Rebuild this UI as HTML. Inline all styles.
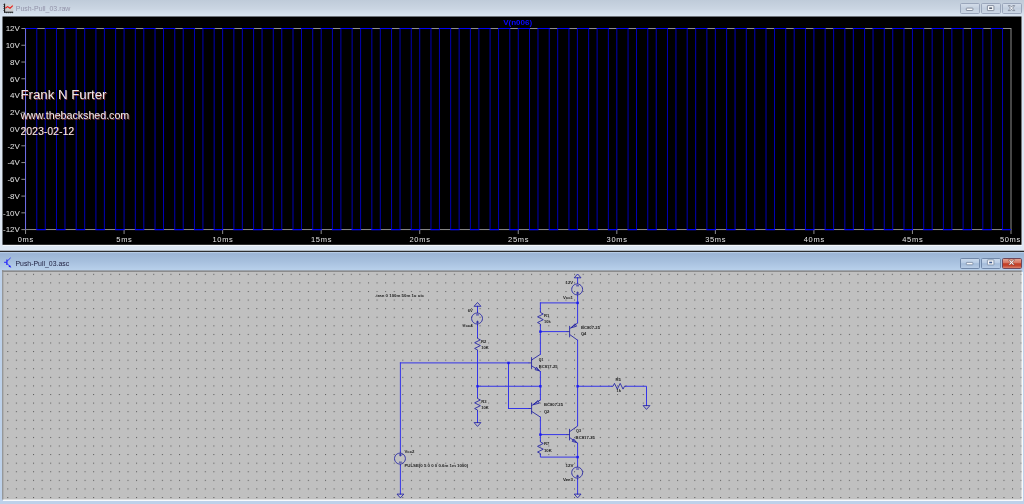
<!DOCTYPE html>
<html><head><meta charset="utf-8"><title>Push-Pull_03</title>
<style>
html,body{margin:0;padding:0}
body{width:1024px;height:504px;overflow:hidden;position:relative;background:#dfe8f3;font-family:"Liberation Sans",Arial,sans-serif}
.abs{position:absolute}
.w1{left:0;top:0;width:1024px;height:251px;background:#dde7f3}
.tb1{left:0;top:0;width:1024px;height:17px;background:linear-gradient(#bfcbd9 0%,#cad5e2 50%,#dbe6f2 100%)}
.t1{left:15.8px;top:4.4px;font-size:7.1px;line-height:9px;color:#a3a3b3;letter-spacing:-0.05px;white-space:nowrap}
.plot{left:0;top:0;display:block;will-change:transform}
.wh1{left:3px;top:17px;width:1019.4px;height:228.6px;background:#f3f6fa}
.sep{left:0;top:250.9px;width:1024px;height:1.1px;background:#2e2e2e}
.w2{left:0;top:252px;width:1024px;height:252px;background:#bdd1ea}
.tb2{left:0;top:252px;width:1024px;height:18px;background:linear-gradient(#c2d6ee 0%,#9bb4d5 9%,#a6bfdd 50%,#b8d0eb 100%)}
.t2{left:15.5px;top:258.8px;font-size:7.2px;line-height:9px;color:#1c1c3c;letter-spacing:-0.1px;white-space:nowrap}
.wh2{left:3px;top:272px;width:1019.5px;height:228.5px;background:#f6f8fb}
.sch{left:0;top:252px;display:block;will-change:transform}
.btn{top:3.3px;width:19.4px;height:10.4px;box-sizing:border-box;border:0.9px solid #9aa6bb;border-radius:1.6px;background:linear-gradient(#d3dce9,#c2cede 50%,#cbd6e4)}
.b2{top:257.6px;height:11px;border-color:#7188aa;background:linear-gradient(#c9d9ec 0%,#b7cbe4 45%,#a3bbd9 52%,#b9cde6 100%)}
.bx{border-color:#6e4658;background:linear-gradient(#e2a392 0%,#d5735f 45%,#c23c24 52%,#c74630 75%,#d98570 100%)}
.ico{left:0;top:0}
</style></head><body>
<div class="abs w1"></div>
<div class="abs tb1"></div>
<div class="abs wh1"></div>
<svg class="abs ico" width="16" height="16" viewBox="0 0 16 16"><rect x="5" y="4" width="8.2" height="7.6" fill="#cdcdcd"/><path d="M4.6 3.6V12.6M4.2 12.2H13.2" stroke="#111" stroke-width="1" fill="none"/><path d="M3.4 4.5h1.2M3.4 6.5h1.2M3.4 8.5h1.2M3.4 10.5h1.2M6.5 12.2v1M8.5 12.2v1M10.5 12.2v1M12.5 12.2v1" stroke="#222" stroke-width="0.7"/><path d="M5.3 8.3L7.6 6.6L10 8.2L12.8 5.6" stroke="#e81c1c" stroke-width="1.1" fill="none"/></svg>
<div class="abs btn" style="left:960.3px"></div>
<div class="abs btn" style="left:981.3px"></div>
<div class="abs btn" style="left:1002.3px"></div>
<svg class="abs" style="left:960px;top:0" width="64" height="16" viewBox="960 0 64 16"><g fill="#f4f6f9" stroke="#707a8c" stroke-width="0.8"><rect x="966.3" y="8.1" width="6.6" height="2.4" rx="0.5"/><rect x="987.4" y="5.6" width="6.5" height="5" rx="0.4"/><path d="M1008.3 5.6h2l1.2 1.5l1.2-1.5h2l-2.1 2.5l2.2 2.5h-2.1l-1.2-1.5l-1.2 1.5h-2.1l2.2-2.5z"/></g><rect x="989.2" y="7.4" width="2.9" height="1.6" fill="#5a6272"/></svg>
<svg class="abs plot" width="1024" height="252" viewBox="0 0 1024 252">
<rect x="2.5" y="16.5" width="1019" height="228.3" fill="#000"/>
<g stroke="#9c9c9c" stroke-width="0.9" fill="none">
<rect x="25.55" y="28.50" width="985.45" height="201.10"/>
<path d="M25.55 28.50 h-4.2"/>
<path d="M25.55 45.26 h-4.2"/>
<path d="M25.55 62.02 h-4.2"/>
<path d="M25.55 78.78 h-4.2"/>
<path d="M25.55 95.53 h-4.2"/>
<path d="M25.55 112.29 h-4.2"/>
<path d="M25.55 129.05 h-4.2"/>
<path d="M25.55 145.81 h-4.2"/>
<path d="M25.55 162.57 h-4.2"/>
<path d="M25.55 179.32 h-4.2"/>
<path d="M25.55 196.08 h-4.2"/>
<path d="M25.55 212.84 h-4.2"/>
<path d="M25.55 229.60 h-4.2"/>
<path d="M25.55 229.60 v4.4"/>
<path d="M124.09 229.60 v4.4"/>
<path d="M222.64 229.60 v4.4"/>
<path d="M321.19 229.60 v4.4"/>
<path d="M419.73 229.60 v4.4"/>
<path d="M518.27 229.60 v4.4"/>
<path d="M616.82 229.60 v4.4"/>
<path d="M715.36 229.60 v4.4"/>
<path d="M813.91 229.60 v4.4"/>
<path d="M912.45 229.60 v4.4"/>
<path d="M1011.00 229.60 v4.4"/>
</g>
<g font-family="Liberation Sans, Arial, sans-serif" font-size="8" fill="#e4e4e4" text-anchor="end">
<text x="19.9" y="31.25">12V</text>
<text x="19.9" y="48.01">10V</text>
<text x="19.9" y="64.77">8V</text>
<text x="19.9" y="81.53">6V</text>
<text x="19.9" y="98.28">4V</text>
<text x="19.9" y="115.04">2V</text>
<text x="19.9" y="131.80">0V</text>
<text x="19.9" y="148.56">-2V</text>
<text x="19.9" y="165.32">-4V</text>
<text x="19.9" y="182.07">-6V</text>
<text x="19.9" y="198.83">-8V</text>
<text x="19.9" y="215.59">-10V</text>
<text x="19.9" y="232.35">-12V</text>
</g>
<g font-family="Liberation Sans, Arial, sans-serif" font-size="7.5" fill="#e4e4e4" text-anchor="middle" letter-spacing="0.7">
<text x="25.90" y="242.3">0ms</text>
<text x="124.44" y="242.3">5ms</text>
<text x="222.99" y="242.3">10ms</text>
<text x="321.54" y="242.3">15ms</text>
<text x="420.08" y="242.3">20ms</text>
<text x="518.62" y="242.3">25ms</text>
<text x="617.17" y="242.3">30ms</text>
<text x="715.71" y="242.3">35ms</text>
<text x="814.26" y="242.3">40ms</text>
<text x="912.80" y="242.3">45ms</text>
<text x="1010.45" y="242.3">50ms</text>
</g>
<path d="M25.55 229.60V28.50 M36.78 28.50V229.60 M45.26 229.60V28.50 M56.49 28.50V229.60 M64.97 229.60V28.50 M76.20 28.50V229.60 M84.68 229.60V28.50 M95.91 28.50V229.60 M104.39 229.60V28.50 M115.62 28.50V229.60 M124.09 229.60V28.50 M135.33 28.50V229.60 M143.80 229.60V28.50 M155.04 28.50V229.60 M163.51 229.60V28.50 M174.75 28.50V229.60 M183.22 229.60V28.50 M194.46 28.50V229.60 M202.93 229.60V28.50 M214.17 28.50V229.60 M222.64 229.60V28.50 M233.87 28.50V229.60 M242.35 229.60V28.50 M253.58 28.50V229.60 M262.06 229.60V28.50 M273.29 28.50V229.60 M281.77 229.60V28.50 M293.00 28.50V229.60 M301.48 229.60V28.50 M312.71 28.50V229.60 M321.19 229.60V28.50 M332.42 28.50V229.60 M340.89 229.60V28.50 M352.13 28.50V229.60 M360.60 229.60V28.50 M371.84 28.50V229.60 M380.31 229.60V28.50 M391.55 28.50V229.60 M400.02 229.60V28.50 M411.26 28.50V229.60 M419.73 229.60V28.50 M430.96 28.50V229.60 M439.44 229.60V28.50 M450.67 28.50V229.60 M459.15 229.60V28.50 M470.38 28.50V229.60 M478.86 229.60V28.50 M490.09 28.50V229.60 M498.57 229.60V28.50 M509.80 28.50V229.60 M518.27 229.60V28.50 M529.51 28.50V229.60 M537.98 229.60V28.50 M549.22 28.50V229.60 M557.69 229.60V28.50 M568.93 28.50V229.60 M577.40 229.60V28.50 M588.64 28.50V229.60 M597.11 229.60V28.50 M608.35 28.50V229.60 M616.82 229.60V28.50 M628.05 28.50V229.60 M636.53 229.60V28.50 M647.76 28.50V229.60 M656.24 229.60V28.50 M667.47 28.50V229.60 M675.95 229.60V28.50 M687.18 28.50V229.60 M695.66 229.60V28.50 M706.89 28.50V229.60 M715.36 229.60V28.50 M726.60 28.50V229.60 M735.07 229.60V28.50 M746.31 28.50V229.60 M754.78 229.60V28.50 M766.02 28.50V229.60 M774.49 229.60V28.50 M785.73 28.50V229.60 M794.20 229.60V28.50 M805.44 28.50V229.60 M813.91 229.60V28.50 M825.14 28.50V229.60 M833.62 229.60V28.50 M844.85 28.50V229.60 M853.33 229.60V28.50 M864.56 28.50V229.60 M873.04 229.60V28.50 M884.27 28.50V229.60 M892.75 229.60V28.50 M903.98 28.50V229.60 M912.45 229.60V28.50 M923.69 28.50V229.60 M932.16 229.60V28.50 M943.40 28.50V229.60 M951.87 229.60V28.50 M963.11 28.50V229.60 M971.58 229.60V28.50 M982.82 28.50V229.60 M991.29 229.60V28.50 M1002.53 28.50V229.60" fill="none" stroke="#0000d6" stroke-width="0.85"/>
<path d="M25.15 28.50H37.18 M36.38 229.60H45.66 M44.86 28.50H56.89 M56.09 229.60H65.37 M64.57 28.50H76.60 M75.80 229.60H85.08 M84.28 28.50H96.31 M95.51 229.60H104.79 M103.99 28.50H116.02 M115.22 229.60H124.50 M123.69 28.50H135.73 M134.93 229.60H144.20 M143.40 28.50H155.44 M154.64 229.60H163.91 M163.11 28.50H175.15 M174.35 229.60H183.62 M182.82 28.50H194.86 M194.06 229.60H203.33 M202.53 28.50H214.57 M213.77 229.60H223.04 M222.24 28.50H234.27 M233.47 229.60H242.75 M241.95 28.50H253.98 M253.18 229.60H262.46 M261.66 28.50H273.69 M272.89 229.60H282.17 M281.37 28.50H293.40 M292.60 229.60H301.88 M301.08 28.50H313.11 M312.31 229.60H321.58 M320.79 28.50H332.82 M332.02 229.60H341.29 M340.49 28.50H352.53 M351.73 229.60H361.00 M360.20 28.50H372.24 M371.44 229.60H380.71 M379.91 28.50H391.95 M391.15 229.60H400.42 M399.62 28.50H411.66 M410.86 229.60H420.13 M419.33 28.50H431.36 M430.56 229.60H439.84 M439.04 28.50H451.07 M450.27 229.60H459.55 M458.75 28.50H470.78 M469.98 229.60H479.26 M478.46 28.50H490.49 M489.69 229.60H498.97 M498.17 28.50H510.20 M509.40 229.60H518.67 M517.88 28.50H529.91 M529.11 229.60H538.38 M537.58 28.50H549.62 M548.82 229.60H558.09 M557.29 28.50H569.33 M568.53 229.60H577.80 M577.00 28.50H589.04 M588.24 229.60H597.51 M596.71 28.50H608.75 M607.95 229.60H617.22 M616.42 28.50H628.45 M627.65 229.60H636.93 M636.13 28.50H648.16 M647.36 229.60H656.64 M655.84 28.50H667.87 M667.07 229.60H676.35 M675.55 28.50H687.58 M686.78 229.60H696.06 M695.26 28.50H707.29 M706.49 229.60H715.76 M714.96 28.50H727.00 M726.20 229.60H735.47 M734.67 28.50H746.71 M745.91 229.60H755.18 M754.38 28.50H766.42 M765.62 229.60H774.89 M774.09 28.50H786.13 M785.33 229.60H794.60 M793.80 28.50H805.84 M805.04 229.60H814.31 M813.51 28.50H825.54 M824.74 229.60H834.02 M833.22 28.50H845.25 M844.45 229.60H853.73 M852.93 28.50H864.96 M864.16 229.60H873.44 M872.64 28.50H884.67 M883.87 229.60H893.15 M892.35 28.50H904.38 M903.58 229.60H912.85 M912.05 28.50H924.09 M923.29 229.60H932.56 M931.76 28.50H943.80 M943.00 229.60H952.27 M951.47 28.50H963.51 M962.71 229.60H971.98 M971.18 28.50H983.22 M982.42 229.60H991.69 M990.89 28.50H1002.93 M1002.13 229.60H1011.00" fill="none" stroke="#0000f4" stroke-width="1.1"/>
<text x="517.6" y="25.3" font-family="Liberation Sans, Arial, sans-serif" font-weight="bold" font-size="8" fill="#0a0aff" text-anchor="middle">V(n006)</text>
<g font-family="Liberation Sans, Arial, sans-serif" fill="#eeeaea" style="text-shadow:0.8px 0.8px 0 #7e3838">
<text x="20.4" y="99.4" font-size="13.25">Frank N Furter</text>
<text x="20.4" y="119.4" font-size="10.65">www.thebackshed.com</text>
<text x="20.4" y="134.6" font-size="10.5">2023-02-12</text>
</g>
<text x="15.8" y="11.25" font-family="Liberation Sans, Arial, sans-serif" font-size="7.2" fill="#9292a8" textLength="54.6" lengthAdjust="spacingAndGlyphs">Push-Pull_03.raw</text>
<path d="M25.55 28.50V229.60" stroke="#c8c8ff" stroke-opacity="0.55" stroke-width="0.9"/>
<rect x="0" y="250.75" width="1024" height="1.2" fill="#242424"/>
</svg>
<div class="abs w2"></div>
<div class="abs tb2"></div>
<div class="abs wh2"></div>
<svg class="abs" style="left:0;top:252px" width="16" height="19" viewBox="0 252 16 19"><g stroke="#1414ff" fill="none"><path stroke-width="0.9" d="M4.1 262.3H6.6"/><path stroke-width="1.1" d="M6.9 259.6V265.1"/><path stroke-width="0.8" d="M7.1 261.2L10.7 257.8M7.1 263.5L10.7 267.3"/></g><path d="M10.9 267.5L8.5 266.7L10 265.1Z" fill="#1414ff"/></svg>
<div class="abs btn b2" style="left:960.3px"></div>
<div class="abs btn b2" style="left:981.3px"></div>
<div class="abs btn b2 bx" style="left:1002.3px"></div>
<svg class="abs" style="left:960px;top:252px" width="64" height="19" viewBox="960 252 64 19"><g fill="#f6f8fb" stroke="#6c7c96" stroke-width="0.7"><rect x="966.3" y="262.4" width="6.6" height="2.4" rx="0.6"/><rect x="987.4" y="259.9" width="6.5" height="5" rx="0.4"/></g><rect x="989.2" y="261.7" width="2.9" height="1.6" fill="#3c5a8c"/><path d="M1008.3 259.9h2l1.2 1.5l1.2-1.5h2l-2.1 2.5l2.2 2.5h-2.1l-1.2-1.5l-1.2 1.5h-2.1l2.2-2.5z" fill="#fbfbfb" stroke="#7a3a32" stroke-width="0.6"/></svg>
<svg class="abs sch" width="1024" height="252" viewBox="0 252 1024 252">
<defs><pattern id="g" x="7.25" y="273.8" width="8.588" height="8.585" patternUnits="userSpaceOnUse"><rect x="-0.05" y="-0.05" width="1.1" height="1.1" fill="#5c5c5c"/></pattern></defs>
<rect x="2.5" y="271" width="1019" height="228.5" fill="#c0c0c0"/>
<rect x="3" y="272" width="1018.5" height="227.5" fill="url(#g)"/>
<rect x="2.2" y="270" width="1019.3" height="2" fill="#8b8b8b"/><rect x="2.2" y="270" width="1019.3" height="0.8" fill="#9fa9b6"/><rect x="2.2" y="270" width="1.1" height="229.5" fill="#8b8b8b"/>
<path d="M577.60 277.80 L577.60 282.52 M577.60 296.28 L577.60 322.90 M540.40 302.90 L577.60 302.90 M540.40 302.90 L540.40 311.10 M540.40 325.42 L540.40 354.30 M540.40 331.60 L566.74 331.60 M577.60 340.19 L577.60 425.70 M400.40 362.90 L528.69 362.90 M540.40 371.49 L540.40 399.91 M477.50 306.30 L477.50 311.62 M477.50 325.38 L477.50 337.00 M477.50 351.32 L477.50 397.10 M477.50 386.25 L540.40 386.25 M477.50 411.42 L477.50 422.60 M508.50 362.90 L508.50 408.50 M508.50 408.50 L528.74 408.50 M540.40 417.09 L540.40 440.60 M540.40 434.60 L566.64 434.60 M540.40 454.92 L540.40 457.10 L577.60 457.10 M577.60 443.19 L577.60 465.72 M577.60 479.48 L577.60 494.10 M577.60 386.25 L611.60 386.25 M625.92 386.25 L646.50 386.25 L646.50 405.60 M400.40 362.90 L400.40 451.72 M400.40 465.48 L400.40 494.10" fill="none" stroke="#3030ea" stroke-width="0.98" stroke-linecap="square"/>
<path d="M577.15 283.95 a5.45 5.45 0 1 0 0.01 0Z M577.60 282.52 L577.60 283.95 M577.60 294.85 L577.60 296.28 M576.17 292.98 L579.03 292.98 M577.60 291.55 L577.60 294.41 M576.17 285.82 L579.03 285.82 M574.20 277.80 L581.00 277.80 L577.60 274.00 L574.20 277.80 M540.40 311.10 L540.40 312.53 L543.26 313.96 L537.54 316.83 L543.26 319.69 L537.54 322.56 L540.40 323.99 L540.40 325.42 M569.60 325.87 L569.60 337.33 M566.74 331.60 L569.60 331.60 M569.60 328.74 L577.60 323.01 M569.60 334.46 L577.60 340.19 M571.03 327.84 L575.09 323.72 L576.53 326.23 Z M531.55 357.17 L531.55 368.63 M528.69 362.90 L531.55 362.90 M531.55 360.04 L540.40 354.31 M531.55 365.76 L540.40 371.49 M539.33 370.78 L535.03 369.70 L536.46 367.20 Z M477.05 313.05 a5.45 5.45 0 1 0 0.01 0Z M477.50 311.62 L477.50 313.05 M477.50 323.95 L477.50 325.38 M476.07 322.08 L478.93 322.08 M477.50 320.65 L477.50 323.51 M476.07 314.92 L478.93 314.92 M474.10 306.30 L480.90 306.30 L477.50 302.50 L474.10 306.30 M477.50 337.00 L477.50 338.43 L480.36 339.86 L474.64 342.73 L480.36 345.59 L474.64 348.46 L477.50 349.89 L477.50 351.32 M477.50 397.10 L477.50 398.53 L480.36 399.96 L474.64 402.83 L480.36 405.69 L474.64 408.56 L477.50 409.99 L477.50 411.42 M474.10 422.60 L480.90 422.60 L477.50 426.40 L474.10 422.60 M531.60 402.77 L531.60 414.23 M528.74 408.50 L531.60 408.50 M531.60 405.64 L540.40 399.91 M531.60 411.36 L540.40 417.09 M533.03 404.74 L537.89 400.62 L539.33 403.13 Z M569.50 428.87 L569.50 440.33 M566.64 434.60 L569.50 434.60 M569.50 431.74 L577.60 426.01 M569.50 437.46 L577.60 443.19 M576.53 442.48 L572.23 441.40 L573.66 438.90 Z M540.40 440.60 L540.40 442.03 L543.26 443.46 L537.54 446.33 L543.26 449.19 L537.54 452.06 L540.40 453.49 L540.40 454.92 M577.15 467.15 a5.45 5.45 0 1 0 0.01 0Z M577.60 465.72 L577.60 467.15 M577.60 478.05 L577.60 479.48 M576.17 476.18 L579.03 476.18 M577.60 474.75 L577.60 477.61 M576.17 469.02 L579.03 469.02 M574.20 494.10 L581.00 494.10 L577.60 497.90 L574.20 494.10 M611.60 386.25 L613.03 386.25 L614.46 383.39 L617.33 389.11 L620.19 383.39 L623.06 389.11 L624.49 386.25 L625.92 386.25 M643.10 405.60 L649.90 405.60 L646.50 409.40 L643.10 405.60 M399.95 453.15 a5.45 5.45 0 1 0 0.01 0Z M400.40 451.72 L400.40 453.15 M400.40 464.05 L400.40 465.48 M398.97 455.02 L401.83 455.02 M400.40 453.59 L400.40 456.45 M398.97 462.18 L401.83 462.18 M397.00 494.10 L403.80 494.10 L400.40 497.90 L397.00 494.10" fill="none" stroke="#2020a4" stroke-width="0.85" stroke-linejoin="round"/>
<g fill="#1c1cf0">
<rect x="576.40" y="301.70" width="2.4" height="2.4"/>
<rect x="539.20" y="330.40" width="2.4" height="2.4"/>
<rect x="576.40" y="385.05" width="2.4" height="2.4"/>
<rect x="507.30" y="361.70" width="2.4" height="2.4"/>
<rect x="539.20" y="385.05" width="2.4" height="2.4"/>
<rect x="476.30" y="385.05" width="2.4" height="2.4"/>
<rect x="539.20" y="433.40" width="2.4" height="2.4"/>
<rect x="576.40" y="455.90" width="2.4" height="2.4"/>
</g>
<g font-family="Liberation Sans, Arial, sans-serif" font-size="4.2" font-weight="bold" fill="#202020">
<text x="375.00" y="296.90" textLength="49.0" lengthAdjust="spacingAndGlyphs">.tran 0 100m 50m 1u uic</text>
<text x="565.60" y="284.00" textLength="7.6" lengthAdjust="spacingAndGlyphs">12V</text>
<text x="563.00" y="298.60" textLength="10.0" lengthAdjust="spacingAndGlyphs">Vcc1</text>
<text x="467.80" y="312.40" textLength="5.0" lengthAdjust="spacingAndGlyphs">6V</text>
<text x="462.50" y="326.60" textLength="10.2" lengthAdjust="spacingAndGlyphs">Vcc4</text>
<text x="544.00" y="317.00" textLength="5.3" lengthAdjust="spacingAndGlyphs">R1</text>
<text x="544.00" y="322.90" textLength="6.6" lengthAdjust="spacingAndGlyphs">10k</text>
<text x="480.90" y="342.80" textLength="5.3" lengthAdjust="spacingAndGlyphs">R2</text>
<text x="481.20" y="349.20" textLength="7.5" lengthAdjust="spacingAndGlyphs">10K</text>
<text x="481.20" y="402.60" textLength="5.3" lengthAdjust="spacingAndGlyphs">R3</text>
<text x="481.20" y="409.00" textLength="7.5" lengthAdjust="spacingAndGlyphs">10K</text>
<text x="544.00" y="445.20" textLength="5.3" lengthAdjust="spacingAndGlyphs">R7</text>
<text x="544.00" y="452.00" textLength="7.8" lengthAdjust="spacingAndGlyphs">10K</text>
<text x="615.60" y="381.40" textLength="5.3" lengthAdjust="spacingAndGlyphs">R5</text>
<text x="616.50" y="392.00" textLength="4.5" lengthAdjust="spacingAndGlyphs">1k</text>
<text x="581.00" y="329.10" textLength="19.0" lengthAdjust="spacingAndGlyphs">BC807-25</text>
<text x="581.00" y="335.10" textLength="5.2" lengthAdjust="spacingAndGlyphs">Q4</text>
<text x="538.80" y="360.70" textLength="4.6" lengthAdjust="spacingAndGlyphs">Q1</text>
<text x="538.80" y="367.60" textLength="18.8" lengthAdjust="spacingAndGlyphs">BC817-25</text>
<text x="544.00" y="406.10" textLength="19.0" lengthAdjust="spacingAndGlyphs">BC807-25</text>
<text x="544.00" y="412.80" textLength="5.3" lengthAdjust="spacingAndGlyphs">Q2</text>
<text x="576.00" y="432.30" textLength="5.0" lengthAdjust="spacingAndGlyphs">Q3</text>
<text x="575.60" y="439.10" textLength="19.3" lengthAdjust="spacingAndGlyphs">BC817-25</text>
<text x="565.60" y="466.60" textLength="8.0" lengthAdjust="spacingAndGlyphs">12V</text>
<text x="563.00" y="481.30" textLength="10.0" lengthAdjust="spacingAndGlyphs">Vee3</text>
<text x="404.40" y="452.60" textLength="10.0" lengthAdjust="spacingAndGlyphs">Vcc2</text>
<text x="404.40" y="466.70" textLength="63.7" lengthAdjust="spacingAndGlyphs">PULSE(0 5 0 0 0 0.6m 1m 1000)</text>
</g>
<text x="15.5" y="265.5" font-family="Liberation Sans, Arial, sans-serif" font-size="7.2" fill="#1c1c3c" textLength="53.6" lengthAdjust="spacingAndGlyphs">Push-Pull_03.asc</text>
</svg>
</body></html>
